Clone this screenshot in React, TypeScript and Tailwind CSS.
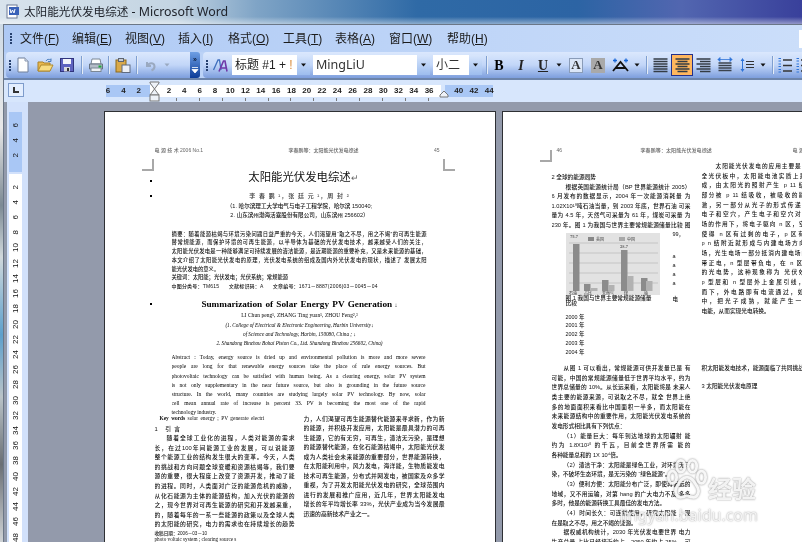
import React from "react";

const CJK = "font-['Liberation_Sans','Noto_Sans_CJK_SC',sans-serif]";
const SERIF = "font-['Liberation_Serif','Noto_Sans_CJK_SC',serif]";

function Line({ t, className = "" }: { t: string; className?: string }) {
  return <p className={"whitespace-nowrap overflow-hidden [text-align-last:justify] " + className}>{t}</p>;
}

function Grip() {
  return (
    <div className="flex flex-col gap-[1px] w-[2px] shrink-0">
      {[0, 1, 2, 3].map((i) => (
        <div key={i} className="w-[2px] h-[2px] bg-[#27416f]" />
      ))}
    </div>
  );
}

function Sep({ className = "" }: { className?: string }) {
  return <div className={"w-[1px] h-[18px] bg-[#7f9fd0] border-r border-white/80 box-content shrink-0 " + className} />;
}

function Caret({ color = "#111", w = 10 }: { color?: string; w?: number }) {
  return (
    <svg width={w} height="6" viewBox="0 0 10 6" className="shrink-0">
      <path d="M2.5 1.5h5L5 4.5z" fill={color} />
    </svg>
  );
}

function Drop() {
  return (
    <div className="w-[13px] h-[20px] shrink-0 flex items-center justify-center bg-gradient-to-b from-[#d8e6fc] to-[#9dbdee]">
      <Caret w={11} />
    </div>
  );
}

function Slot({ w = 22, children, className = "" }: { w?: number; children?: React.ReactNode; className?: string }) {
  return (
    <div style={{ width: w }} className={"h-[22px] shrink-0 flex items-center justify-center " + className}>
      {children}
    </div>
  );
}

const IconNew = () => (
  <svg width="12" height="16" viewBox="0 0 12 16">
    <path d="M1 1h7l3 3v11H1z" fill="#fff" stroke="#6f7f9a" />
    <path d="M8 1v3h3" fill="#dfe6f2" stroke="#8a98b0" />
  </svg>
);
const IconOpen = () => (
  <svg width="17" height="15" viewBox="0 0 17 15">
    <path d="M1 4h5l1 1h6v8H1z" fill="#e8b84e" stroke="#a9812a" />
    <path d="M1 13l3-6h12l-3 6z" fill="#f7dc82" stroke="#b08a2e" />
    <path d="M9 3c1-2 3-2 5-1M14 0.5v3h-3" fill="none" stroke="#4d7fbe" strokeWidth="1" />
  </svg>
);
const IconSave = () => (
  <svg width="14" height="14" viewBox="0 0 14 14">
    <rect x="0.5" y="0.5" width="13" height="13" fill="#5e63c0" stroke="#31357e" />
    <rect x="3" y="1" width="8" height="5" fill="#f3f5fb" />
    <rect x="4" y="9" width="6" height="4.5" fill="#d8d9e0" />
    <rect x="7" y="10" width="2" height="3" fill="#333" />
  </svg>
);
const IconPrint = () => (
  <svg width="16" height="14" viewBox="0 0 16 14">
    <path d="M4 1h8l1 5H3z" fill="#fff" stroke="#7b8795" />
    <path d="M1.5 6h13v5h-13z" fill="#b4bcc8" stroke="#667282" />
    <rect x="3" y="10" width="10" height="3.5" fill="#eef1f5" stroke="#7b8795" />
    <rect x="10.5" y="7.5" width="3" height="2" fill="#1fa83a" />
  </svg>
);
const IconPaste = () => (
  <svg width="16" height="15" viewBox="0 0 16 15">
    <rect x="1" y="2" width="10" height="12" fill="#d9a94a" stroke="#8b6a1e" />
    <rect x="3.5" y="0.5" width="5" height="3" fill="#c7ccd6" stroke="#5d6470" />
    <rect x="7" y="7" width="8" height="7.5" fill="#eceff5" stroke="#5f6b80" />
  </svg>
);
const IconUndo = () => (
  <svg width="13" height="13" viewBox="0 0 13 13">
    <path d="M3 3v4h4M3.5 6.5C5 3.5 10 3 10.5 7c.2 1.7-1 3.5-3 4.5" fill="none" stroke="#9aa9c0" strokeWidth="2" />
  </svg>
);
const IconStyles = () => (
  <svg width="16" height="15" viewBox="0 0 16 15">
    <path d="M0.5 12L5 2h1.5L8 12" fill="none" stroke="#3f6fbd" strokeWidth="1.3" />
    <path d="M6 13.5L10.5 3H12l2 10.5M8 10h5.5" fill="none" stroke="#6f3aa8" strokeWidth="1.6" />
  </svg>
);
const Lines = ({ kind }: { kind: "l" | "c" | "r" | "d" }) => {
  const rows = [1, 3.5, 6, 8.5, 11, 13.5];
  const wide = [0, 1, 2, 3, 4, 5];
  return (
    <svg width="15" height="15" viewBox="0 0 15 15">
      {wide.map((i) => {
        const short = i % 2 === 1;
        let x1 = 0.5,
          x2 = 14.5;
        if (kind === "c" && short) {
          x1 = 2.5;
          x2 = 12.5;
        }
        if (kind === "r" && short) {
          x1 = 4;
        }
        return <path key={i} d={`M${x1} ${rows[i]}H${x2}`} stroke="#333b44" strokeWidth="1.4" />;
      })}
    </svg>
  );
};
const IconDist = () => (
  <svg width="16" height="16" viewBox="0 0 16 16">
    {[6, 8.5, 11, 13.5].map((y) => (
      <path key={y} d={`M1.5 ${y}H14.5`} stroke="#3a424d" strokeWidth="1.5" />
    ))}
    <path d="M1 2.5h14M1 2.5l2-2v4zM15 2.5l-2-2v4z" fill="#2f74d8" stroke="#2f74d8" strokeWidth="0.8" />
  </svg>
);
const IconSpacing = () => (
  <svg width="14" height="16" viewBox="0 0 14 16">
    <path d="M2.5 1L0.5 4h4zM2.5 15l-2-3h4z" fill="#2f74d8" />
    <path d="M2.5 4v8" stroke="#2f74d8" />
    {[4, 7, 10].map((y) => (
      <path key={y} d={`M6 ${y + 0.5}H14`} stroke="#333" strokeWidth="1.2" />
    ))}
  </svg>
);
const IconPhon = () => (
  <svg width="17" height="14" viewBox="0 0 17 14">
    <path d="M1 13L8.5 4 16 13M4 10h9" fill="none" stroke="#111" strokeWidth="1.8" />
    <path d="M1 2.5h4M3 .5v4M12 2.5h4M14 .5v4" stroke="#1666d8" strokeWidth="1.3" />
  </svg>
);
const IconList = () => (
  <svg width="14" height="15" viewBox="0 0 14 15">
    {[2, 7.5, 13].map((y) => (
      <path key={y} d={`M5 ${y}H14`} stroke="#333" strokeWidth="1.3" />
    ))}
    {[0.5, 3, 6, 8.5, 11.5, 14].map((y) => (
      <path key={y} d={`M0.5 ${y}H3`} stroke="#2f74d8" strokeWidth="1.2" />
    ))}
  </svg>
);
const IconTabL = () => (
  <svg width="8" height="8" viewBox="0 0 8 8">
    <path d="M2 1v5h5" fill="none" stroke="#333" strokeWidth="2" />
  </svg>
);

const Menu = ({ c, k }: { c: string; k: string }) => (
  <span className="whitespace-nowrap">
    {c}(<span className="underline">{k}</span>)
  </span>
);

const menus: [string, string, number][] = [
  ["文件", "F", 52],
  ["编辑", "E", 53],
  ["视图", "V", 53],
  ["插入", "I", 50],
  ["格式", "O", 55],
  ["工具", "T", 52],
  ["表格", "A", 54],
  ["窗口", "W", 58],
  ["帮助", "H", 44],
];

const pageLinesAbs = [
  "摘要：随着能源枯竭与环境污染问题日益严重的今天，人们渴望用“取之不尽，用之不竭”的可再生能源",
  "替常规能源，而保护环境的可再生能源，以半导体为基础的光伏发电技术，越来越受人们的关注，",
  "太阳能光伏发电是一种能够满足可持续发展的清洁能源，是近期能源的重要补充，又是未来能源的基础，",
  "本文介绍了太阳能光伏发电的原理，光伏发电系统的组成及国内外光伏发电的现状，描述了 发展太阳",
  "能光伏发电的意义。",
];
const en = [
  "Abstract : Today, energy source is dried up and environmental pollution is more and more severe",
  "people are long for that renewable energy sources take the place of rule energy sources. But",
  "photovoltaic technology can be satisfied with human being. As a clearing energy, solar PV system",
  "is not only supplementary in the near future source, but also is grounding in the future source",
  "structure. In the world, many countries are studying largely solar PV technology. By now, solar",
  "cell mean annual rate of increase is percent 33. PV is becoming the most one of the rapid",
];
const col1 = [
  "随着全球工业化的进程，人类对能源的需求",
  "长，在过100年间能源工业的发展，可以说能源",
  "整个能源工业的结构发生很大的变革。今天，人类",
  "的挑战和方向问题全球变暖和资源枯竭等，我们要",
  "源的重要，很大程度上改变了资源开发，推动了能",
  "的进程。同时，人类面对广泛的能源危机的威胁，",
  "从化石能源为主体的能源结构，加入光伏的能源的",
  "之，现今世界对可再生能源的研究和开发越来重，",
  "的，随着每年的一系一些能源的政策以及全球人类",
  "的太阳能的研究，电力的需求也在持续增长的趋势",
];
const col2 = [
  "力，人们渴望可再生能源替代能源来寻求新，作为新",
  "的能源，并积极开发应用，太阳能是最具潜力的可再",
  "生能源，它的有无穷，可再生，清洁无污染，是理想",
  "的能源替代能源，在化石能源枯竭中，太阳能光伏发",
  "成为人类社会未来能源的重要部分，世界能源转换，",
  "在太阳能利用中，风力发电，海洋能，生物质能发电",
  "技术可再生能源，分布式并网发电，被国家及众多学",
  "重视，为了开发太阳能光伏发电的研究，全球范围内",
  "进行的发展和推广应用，近几年，世界太阳能发电",
  "增长的年平均增长率 33%，光伏产业成为当今发展最",
  "迅速的高新技术产业之一。",
];
const p2a = [
  "根据英国能源统计局（BP 世界能源统计 2005）",
  "6 月发布的数据显示，2004 年一次能源消耗量 为",
  "1.02X10¹⁰吨石油当量，到 2003 年底，世界石油 可采",
  "量为 4.5 年，天然气可采量为 61 年，煤炭可采量 为",
  "230 年。图 1 为我国与世界主要常规能源储量比较 图",
];
const p2b = [
  "从图 1 可以看出，常规能源可供开发量已是 有",
  "可能，中国的常规能源储量低于世界平均水平，约为",
  "世界总储量的 10%。从长远来看，太阳能将是 未来人",
  "类主要的能源来源，可说取之不尽，就全 世界上绝",
  "多的地面面积来看比中国面积一半多，而太阳能在",
  "未来能源结构中的重要作用，太阳能光伏发电系统的",
  "发电形式相比具有下列优点：",
  "（1）能量巨大：每年到达地球的太阳辐射 能",
  "约为 1.8X10¹⁸ 的千瓦，目前全世界所需 能的",
  "各种能量总和的 1X 10⁴倍。",
  "（2）清洁干净：太阳能是绿色工业，对环境无污",
  "染，不破坏生态环境，是无污染的 “绿色能源”。",
  "（3）便利方便：太阳能分布广泛，即使再偏远的",
  "地域，又不用运输，对第 hang 的广大电力不及 多多",
  "多时，他是的能源转换工具最佳的发电方法。",
  "（4）时间长久：可连续使用，研究太阳能 ，现",
  "在是取之不尽，用之不竭的能源。",
  "据权威机构统计，2030 年光伏发电要世界 电力",
  "生产总量 占比已经接近约占，2050 年约占 25%， 可",
];
const p2c = [
  "太阳能光伏发电的应用主要是在一些地区的",
  "全光伏板中，太阳能电池实质上是由若干单元",
  "成，由太阳光的照射产生 p 11 结时，一部分",
  "部分被 p 11 结吸收，被吸收的能量使半导体",
  "激，另一部分从光子的形式传递成 p 11 结，",
  "电子和空穴，产生电子和空穴对，在 n 11 结",
  "场的作用下，将电子驱向 n 区，空穴驱向 p 区",
  "使得 n 区有过剩的电子，p 区有过剩的空穴",
  "p n 结附近就形成与内建电场方向相反的光生",
  "场，光生电场一部分抵消内建电场的同时，还使",
  "带正电，n 型层带负电，在 n 区和 p 区之间",
  "的光电势，这种现象称为 光伏效应，若在外",
  "p 型层和 n 型层外上金属引线，接通负载，",
  "而下，外电路即有电流通过，如此形成一个",
  "中，把光子成熟，就能产生一定的电压和",
  "电能，从而实现光电转换。",
];

function BarChart() {
  const bars: [number, number, string][] = [
    [7, 11, "#8b8b8b"],
    [18, 51, "#8c8c8c"],
    [25, 55, "#b2b2b2"],
    [36, 47, "#8c8c8c"],
    [42, 52, "#b2b2b2"],
    [55, 17, "#8c8c8c"],
    [61, 43, "#b2b2b2"],
    [75, 45, "#8c8c8c"],
    [80, 48, "#b2b2b2"],
  ];
  return (
    <svg width="94" height="62" viewBox="0 0 94 62" className="block shrink-0">
      <rect width="94" height="62" fill="#e2e2e2" />
      {[10, 20, 30, 40, 50].map((y) => (
        <path key={y} d={`M3 ${y}H92`} stroke="#c4c4c4" />
      ))}
      {bars.map(([x, y, c]) => (
        <rect key={x} x={x} y={y} width="6.5" height={58 - y} fill={c} />
      ))}
      <rect x="22" y="4" width="6" height="4" fill="#888" />
      <rect x="53" y="4" width="6" height="4" fill="#a8a8a8" />
      <g fontSize="4" fill="#555" fontFamily="Noto Sans CJK SC">
        <text x="4" y="5">75.7</text>
        <text x="30" y="8">美国</text>
        <text x="61" y="8">中国</text>
        <text x="54" y="15">28.7</text>
        <text x="3" y="62">石油</text>
        <text x="18" y="62">占比</text>
        <text x="36" y="62">天然气</text>
        <text x="58" y="62">煤</text>
        <text x="78" y="62">铀</text>
      </g>
    </svg>
  );
}

function Paw() {
  return (
    <svg width="40" height="46" viewBox="0 0 58 60" className="drop-shadow-[0_0_1px_rgba(100,100,100,0.8)]">
      <g fill="none" stroke="#fff" strokeOpacity="0.9" strokeWidth="4">
        <ellipse cx="8" cy="26" rx="6" ry="9" />
        <ellipse cx="20" cy="10" rx="6" ry="8.5" />
        <ellipse cx="37" cy="10" rx="6" ry="8.5" />
        <ellipse cx="50" cy="26" rx="6" ry="9" />
        <path d="M29 26c-8 0-11 8-15 14-4 7 0 16 7 15 4-.5 6-2 8-2s4 1.5 8 2c7 1 11-8 7-15-4-6-7-14-15-14z" />
      </g>
    </svg>
  );
}

const Crop = ({ className }: { className: string }) => <div className={"absolute w-[12px] h-[12px] border-[#a8a8a8] " + className} />;

export default function App() {
  return (
    <div className={"w-[802px] h-[542px] overflow-hidden flex flex-col bg-[#939aab] blur-[0.35px] relative " + CJK}>
      {/* Title bar */}
      <div className="h-[24px] shrink-0 flex items-center gap-[3px] pl-[6px] bg-[linear-gradient(180deg,transparent_70%,rgba(255,255,255,0.45)),linear-gradient(90deg,#d8e3ec_0%,#c3d4e2_22%,#7fa4c6_32%,#2f6aa6_52%,#2c64a4_72%,#5266b0_85%,#39409b_100%)]">
        <svg width="15" height="16" viewBox="0 0 15 16" className="shrink-0">
          <rect x="1" y="1" width="10" height="13" fill="#fff" stroke="#6c7b96" />
          <rect x="3" y="3" width="10" height="8" fill="#3a62b8" />
          <path d="M4 5l1 4 1.5-3L8 9l1-4" fill="none" stroke="#fff" />
        </svg>
        <span className="text-[12.4px] text-[#20242c] whitespace-nowrap font-['Noto_Sans','Noto_Sans_CJK_SC',sans-serif]">
          <span className="text-[11.6px]">太阳能光伏发电综述</span> - Microsoft Word
        </span>
      </div>
      {/* Body with left desktop strip */}
      <div className="flex-1 min-h-0 flex">
        <div className="w-[3px] shrink-0 bg-[linear-gradient(180deg,#cfdbe6_0%,#e8e8e8_20%,#7c8a94_35%,#d0d8dc_45%,#5da0cc_60%,#b9c3c8_72%,#6a6f74_85%,#cfd3d6_100%)]" />
        <div className="flex-1 min-w-0 flex flex-col border-l border-t border-[#6b7787]">
          {/* Menu */}
          <div className="h-[27px] shrink-0 flex items-center pl-[6px] bg-gradient-to-r from-[#aec9f4] to-[#cbdefa] text-[12px] text-[#1c1c1c]">
            <Grip />
            <div className="flex items-center ml-[8px]">
              {menus.map(([c, k, w]) => (
                <div key={k} style={{ width: w }} className="shrink-0">
                  <Menu c={c} k={k} />
                </div>
              ))}
            </div>
            <div className="ml-auto w-[3px] h-[18px] bg-white" />
          </div>
          {/* Toolbars */}
          <div className="h-[28px] shrink-0 flex items-stretch pl-[2px] bg-gradient-to-r from-[#b6cef5] to-[#cbdefa] border-b-2 border-[#6c84aa]">
            <div className="w-[184px] shrink-0 flex items-center pl-[3px] rounded-l-[4px] bg-gradient-to-b from-[#dbe8fd] via-[#c2d6f8] to-[#7d9edd]">
              <Grip />
              <Slot w={20} className="ml-[2px]"><IconNew /></Slot>
              <Slot w={24}><IconOpen /></Slot>
              <Slot w={20}><IconSave /></Slot>
              <Sep className="ml-[4px]" />
              <Slot w={25}><IconPrint /></Slot>
              <Sep />
              <Slot w={26}><IconPaste /></Slot>
              <Sep />
              <Slot w={24}><IconUndo /></Slot>
              <Caret color="#9aa9c0" />
            </div>
            <div className="w-[10px] shrink-0 flex flex-col items-center justify-between py-[4px] rounded-r-[3px] bg-gradient-to-b from-[#6f9fe4] to-[#0c3c98]">
              <span className="text-[7px] leading-[7px] text-[#10203f] font-bold">»</span>
              <svg width="8" height="7" viewBox="0 0 8 7"><path d="M1 0.5h6M1 2.5h6L4 6z" fill="#fff" stroke="#fff" strokeWidth="0.8" /></svg>
            </div>
            <div className="flex-1 min-w-0 ml-[3px] flex items-center pl-[3px] rounded-l-[4px] overflow-hidden bg-gradient-to-b from-[#dbe8fd] via-[#c2d6f8] to-[#7d9edd]">
              <Grip />
              <Slot w={23} className="ml-[1px]"><IconStyles /></Slot>
              <div className="w-[65px] h-[20px] shrink-0 bg-white pl-[3px] text-[12px] leading-[20px] text-[#222] whitespace-nowrap overflow-hidden">
                标题 #1 + <span className="text-[#d98b3a]">!</span>
              </div>
              <Drop />
              <div className="w-[104px] h-[20px] ml-[3px] shrink-0 bg-white pl-[3px] text-[12.5px] leading-[20px] text-[#333] font-['Noto_Sans',sans-serif]">MingLiU</div>
              <Drop />
              <div className="w-[36px] h-[20px] ml-[3px] shrink-0 bg-white pl-[3px] text-[12px] leading-[20px] text-[#333]">小二</div>
              <Drop />
              <Sep className="ml-[4px]" />
              <Slot w={22} className={"text-[14px] font-bold text-black " + SERIF}>B</Slot>
              <Slot w={22} className={"text-[14px] font-bold italic text-[#222] " + SERIF}>I</Slot>
              <Slot w={22} className={"text-[14px] font-bold underline text-[#222] " + SERIF}>U</Slot>
              <Caret />
              <div className="ml-[5px] w-[14px] h-[15px] shrink-0 flex items-center justify-center border border-[#8a9cb8] text-[13px] font-bold text-[#333] bg-[#dbe6f7] font-['Liberation_Serif',serif]">A</div>
              <div className="ml-[8px] w-[14px] h-[15px] shrink-0 flex items-center justify-center text-[13px] font-bold text-[#333] bg-[#a9a9a9] font-['Liberation_Serif',serif]">A</div>
              <Slot w={24} className="ml-[3px]"><IconPhon /></Slot>
              <Caret />
              <Sep className="ml-[4px]" />
              <Slot w={22} className="ml-[1px]"><Lines kind="l" /></Slot>
              <Slot w={22} className="bg-[#ffb75e] border-[1.5px] border-[#24318c]"><Lines kind="c" /></Slot>
              <Slot w={21}><Lines kind="r" /></Slot>
              <Slot w={22}><IconDist /></Slot>
              <Slot w={22}><IconSpacing /></Slot>
              <Caret />
              <Sep className="ml-[4px]" />
              <Slot w={22}><IconList /></Slot>
              <Slot w={14}><IconList /></Slot>
            </div>
          </div>
          {/* Ruler */}
          <div className="h-[22px] shrink-0 relative flex bg-[#d7e6fc] text-[8px] font-['Liberation_Sans',sans-serif] font-bold text-[#222]">
            <div className="absolute left-[4px] top-[3px] w-[16px] h-[14px] bg-[#e3eefe] border border-[#7e9ccb] flex items-center justify-center"><IconTabL /></div>
            <div className="ml-[102px] mt-[5px] h-[12px] w-[44px] bg-[#a9c7f5] flex overflow-visible">
              <div className="flex -ml-[5.6px]">
                {["6", "4", "2"].map((n) => (
                  <span key={n} className="w-[15.3px] shrink-0 text-center leading-[12px]">{n}</span>
                ))}
              </div>
            </div>
            <div className="relative mt-[5px] h-[12px] w-[291px] bg-white flex pl-[11.4px]">
              {["2","4","6","8","10","12","14","16","18","20","22","24","26","28","30","32","34","36"].map((n) => (
                <span key={n} className="w-[15.3px] shrink-0 text-center leading-[12px]">{n}</span>
              ))}
              <div className="absolute left-[26px] top-[13px] flex gap-[21.9px]">
                {[0,1,2,3,4,5,6,7,8,9,10,11].map((i) => (
                  <i key={i} className="block w-[1px] h-[3px] bg-[#777]" />
                ))}
              </div>
            </div>
            <div className="ml-[4px] mt-[5px] h-[12px] w-[48px] bg-[#a9c7f5] flex pl-[6px]">
              {["40", "42", "44"].map((n) => (
                <span key={n} className="w-[15.3px] shrink-0 text-center leading-[12px]">{n}</span>
              ))}
            </div>
            <svg width="11" height="21" viewBox="0 0 11 21" className="absolute left-[145px] top-[1px]">
              <path d="M1 1h9v1L5.5 8 1 2zM1 14L5.5 8l4.5 6z" fill="#eef2f8" stroke="#777" />
              <rect x="1" y="14" width="9" height="6" fill="#eef2f8" stroke="#777" />
            </svg>
            <svg width="10" height="8" viewBox="0 0 10 8" className="absolute left-[435px] top-[10px]">
              <path d="M1 7V5l4-4 4 4v2z" fill="#eef2f8" stroke="#777" />
            </svg>
          </div>
          {/* Document area */}
          <div className="flex-1 min-h-0 flex">
            <div className="w-[22px] shrink-0 bg-[#d2e1fb] border-l border-[#8d98a8] ml-[2px] pl-[2px] pt-[10px] overflow-hidden text-[8px] font-['Liberation_Sans',sans-serif] text-[#111]">
              <div className="w-[13px] h-[60px] bg-[#a9c7f5] pt-[5.4px]">
                {["6", "4", "2"].map((n) => (
                  <div key={n} className="h-[15.3px] flex items-center justify-center"><span className="[writing-mode:vertical-rl] rotate-180 leading-[13px]">{n}</span></div>
                ))}
              </div>
              <div className="w-[13px] mt-[2px] bg-white pt-[5.4px] h-[400px]">
                {["2","4","6","8","10","12","14","16","18","20","22","24","26","28","30","32","34","36","38","40","42","44","46","48"].map((n) => (
                  <div key={n} className="h-[15.22px] flex items-center justify-center"><span className="[writing-mode:vertical-rl] rotate-180 leading-[13px]">{n}</span></div>
                ))}
              </div>
            </div>
            <div className="flex-1 min-w-0 bg-[#939aab] pl-[76px] pt-[9px] flex gap-[6px] overflow-hidden relative font-medium">
              {/* Page 1 */}
              <div className="relative w-[392px] h-[440px] shrink-0 bg-white border-t-[1.5px] border-x-[1.5px] border-[#2e3034] overflow-hidden text-[#111] pl-[49.5px] pt-[34px]">
                <Crop className="left-[37px] top-[47px] border-r-2 border-b-2" />
                <Crop className="left-[338px] top-[47px] border-l-2 border-b-2" />
                <i className="absolute left-[45px] top-[68px] w-[2px] h-[2px] bg-black" />
                <i className="absolute left-[45px] top-[83px] w-[2px] h-[2px] bg-black" />
                <i className="absolute left-[45px] top-[191px] w-[2px] h-[2px] bg-black" />
                <div className="w-[290px] flex justify-between text-[5px] leading-[8px] text-[#666] pr-[5px]">
                  <span>电 源 技 术 2006 No.1</span>
                  <span className="ml-[10px]">李春鹏等：太阳能光伏发电综述</span>
                  <span>45</span>
                </div>
                <h1 className="mt-[15px] w-[298px] text-center text-[11.4px] leading-[16px] font-normal text-[#111]">太阳能光伏发电综述<span className="text-[#666] text-[9px]">↵</span></h1>
                <p className="mt-[5.5px] w-[290px] text-center text-[6px] leading-[9px] text-[#333] tracking-[1px]">李 春 鹏 ¹，张 廷 元 ¹，周 封 ²</p>
                <p className="w-[290px] text-center text-[5.6px] leading-[9.5px] mt-[1px]">（1. 哈尔滨理工大学电气与电子工程学院，哈尔滨 150040;</p>
                <p className="w-[290px] text-center text-[5.6px] leading-[9.5px]">2. 山东滨州渤海活塞股份有限公司，山东滨州 256602）</p>
                <div className="ml-[17px] w-[255px] mt-[9px] text-[5.3px] leading-[8.8px]">
                  <Line t={pageLinesAbs[0]} />
                  <Line t={pageLinesAbs[1]} />
                  <Line t={pageLinesAbs[2]} />
                  <Line t={pageLinesAbs[3]} />
                  <p className="whitespace-nowrap">{pageLinesAbs[4]}</p>
                  <p className="whitespace-nowrap leading-[8.5px]">关键词：太阳能；光伏发电；光伏系统；常规能源</p>
                  <p className={"whitespace-nowrap leading-[8.5px] text-[5px] tracking-[0.2px]"}>中图分类号：TM615 &nbsp;&nbsp;&nbsp;&nbsp;&nbsp;文献标识码：A &nbsp;&nbsp;&nbsp;&nbsp;&nbsp;文章编号：1671－8887(2006)03－0045－04</p>
                </div>
                <div className={SERIF + " text-black"}>
                  <h2 className="mt-[8px] w-[290px] text-center text-[9.2px] leading-[12px] font-bold [word-spacing:1px]">Summarization of Solar Energy PV Generation<span className="font-normal text-[6px]"> ↓</span></h2>
                  <p className="w-[290px] text-center text-[5.4px] leading-[9.2px] tracking-[0.1px]">LI Chun peng¹, ZHANG Ting yuan¹, ZHOU Feng²,³</p>
                  <p className="w-[290px] text-center text-[5.2px] leading-[9.2px] italic">(1. College of Electrical &amp; Electronic Engineering, Harbin University↓</p>
                  <p className="w-[290px] text-center text-[5.2px] leading-[9.2px] italic">of Science and Technology, Harbin, 150080, China ; ↓</p>
                  <p className="w-[290px] text-center text-[5.2px] leading-[9.2px] italic">2. Shandong Binzhou Bohai Piston Co., Ltd. Shandong Binzhou 256602, China)</p>
                  <div className="ml-[17px] w-[254px] mt-[5px] text-[5.5px] leading-[9.17px]">
                    {en.map((t) => (
                      <Line key={t} t={t} />
                    ))}
                    <p className="whitespace-nowrap">technology industry.</p>
                  </div>
                </div>
                <div className="-mt-[4px] w-[290px] flex gap-[9px] text-[5.8px]">
                  <div className="w-[140px] shrink-0 leading-[9.6px]">
                    <p className={SERIF + " ml-[5px] text-[5.4px] leading-[8px] whitespace-nowrap [word-spacing:1px]"}><b>Key words</b> solar energy ; PV generate electri</p>
                    <p className="mt-[3.5px] leading-[9px] tracking-[3px]">1 引言</p>
                    {col1.map((t, i) => (
                      <Line key={t} t={t} className={i === 0 ? "pl-[12px]" : ""} />
                    ))}
                    <p className="text-[4.6px] leading-[6px] mt-[1px] whitespace-nowrap">收稿日期：2006－03－10</p>
                    <p className={SERIF + " text-[5.2px] leading-[5px] whitespace-nowrap"}>photo voltaic system ; clearing source s</p>
                  </div>
                  <div className="w-[141px] shrink-0 pt-[1.3px] leading-[9.5px]">
                    {col2.map((t, i) => (
                      i === col2.length - 1 ? <p key={t} className="whitespace-nowrap">{t}</p> : <Line key={t} t={t} />
                    ))}
                  </div>
                </div>
              </div>
              {/* Page 2 */}
              <div className="relative w-[340px] h-[440px] shrink-0 bg-white border-t-[1.5px] border-l-[1.5px] border-[#2e3034] overflow-hidden text-[#111] pl-[48.5px] pt-[34px]">
                <Crop className="left-[37px] top-[38px] border-r-2 border-b-2" />
                <div className="w-[300px] flex text-[5px] leading-[8px] text-[#666] whitespace-nowrap">
                  <span className="ml-[5px] w-[84px] shrink-0">46</span>
                  <span className="w-[152px] shrink-0 tracking-[0.1px]">李春鹏等：太阳能光伏发电综述</span>
                  <span>电 源 技 术</span>
                </div>
                <div className="flex gap-[11px] text-[5.7px] mt-[8px]">
                  <div className="w-[139px] shrink-0 pt-[10.5px]">
                    <p className="leading-[9px]">2 全球的能源局势</p>
                    <div className="mt-[1px] leading-[9.5px]">
                      {p2a.map((t, i) => (
                        <Line key={t} t={t} className={i === 0 ? "pl-[14px]" : ""} />
                      ))}
                    </div>
                    <div className="flex mt-[3px] ml-[14px]">
                      <div className="w-[94px] shrink-0">
                        <BarChart />
                        <p className="text-[5.7px] leading-[5.5px] mt-[0.5px] w-[90px]">图 1 我国与世界主要常规能源储量比较</p>
                      </div>
                      <div className="ml-[13px] text-[5.5px] leading-[8px] whitespace-nowrap">
                        <p className="-mt-[3px]">99，</p>
                        <p className="mt-[14px]">a</p>
                        <p className="mt-[1px]">a</p>
                        <p className="mt-[1px]">a</p>
                        <p className="mt-[1px]">a</p>
                        <p className="mt-[8px]">电</p>
                      </div>
                    </div>
                    <div className="ml-[14px] mt-[6px] text-[5.4px] leading-[8.9px]">
                      <p>2000 年</p>
                      <p>2001 年</p>
                      <p>2002 年</p>
                      <p>2003 年</p>
                      <p>2004 年</p>
                    </div>
                    <div className="mt-[7px] leading-[9.65px]">
                      {p2b.map((t, i) => (
                        <Line key={t} t={t} className={[0, 7, 10, 12, 15, 17].includes(i) ? "pl-[12px]" : i === 6 || i === 9 || i === 11 || i === 14 || i === 16 ? "[text-align-last:left]" : ""} />
                      ))}
                    </div>
                  </div>
                  <div className="w-[139px] shrink-0 leading-[9.65px]">
                    {p2c.map((t, i) => (
                      <Line key={t} t={t} className={i === 0 ? "pl-[14px]" : i === p2c.length - 1 ? "[text-align-last:left]" : ""} />
                    ))}
                    <p className="mt-[47px] whitespace-nowrap">积太阳能发电技术，能源面临了共同挑战</p>
                    <p className="mt-[9px] whitespace-nowrap">3 太阳能光伏发电原理</p>
                  </div>
                </div>
              </div>
              {/* Watermark */}
              <div className="absolute left-[612px] top-[353px] w-[125px] h-[85px]">
                <div className="absolute left-[27px] top-[2px]"><Paw /></div>
                <span className="absolute left-[68px] top-[21px] text-[24px] leading-[28px] font-bold text-white/90 [text-shadow:0_0_1.5px_rgba(90,90,90,0.85)]">经验</span>
                <span className="absolute right-[7px] top-[48px] text-[16px] leading-[24px] font-normal text-white/85 [text-shadow:0_0_1.5px_rgba(90,90,90,0.7)] whitespace-nowrap font-['Noto_Sans',sans-serif]">jingyan.baidu.com</span>
              </div>
            </div>
          </div>
        </div>
      </div>
    </div>
  );
}
